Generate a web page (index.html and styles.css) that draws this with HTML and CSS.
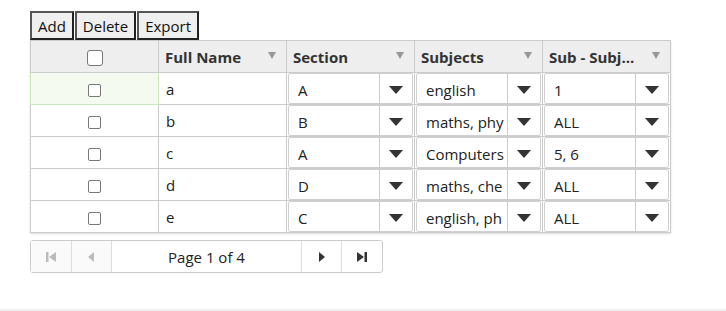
FILE: index.html
```html
<!DOCTYPE html>
<html>
<head>
<meta charset="utf-8">
<title>Students</title>
<link rel="stylesheet" href="styles.css">
</head>
<body>
<div id="page">
	<div class="toolbar">
		<button class="tool">Add</button><button class="tool">Delete</button><button class="tool">Export</button>
	</div>

	<table class="grid">
		<thead>
			<tr>
				<th class="check"><span class="box big"></span></th>
				<th><div class="head"><span>Full Name</span><i class="filter"></i></div></th>
				<th><div class="head"><span>Section</span><i class="filter"></i></div></th>
				<th><div class="head"><span>Subjects</span><i class="filter"></i></div></th>
				<th><div class="head"><span>Sub - Subj...</span><i class="filter"></i></div></th>
			</tr>
		</thead>
		<tbody>
			<tr>
				<td class="check focus"><span class="box"></span></td>
				<td class="name">a</td>
				<td class="drop"><div class="select"><span class="val">A</span><span class="arrow"></span></div></td>
				<td class="drop"><div class="select"><span class="val">english</span><span class="arrow"></span></div></td>
				<td class="drop"><div class="select"><span class="val">1</span><span class="arrow"></span></div></td>
			</tr>
			<tr>
				<td class="check"><span class="box"></span></td>
				<td class="name">b</td>
				<td class="drop"><div class="select"><span class="val">B</span><span class="arrow"></span></div></td>
				<td class="drop"><div class="select"><span class="val">maths, phy</span><span class="arrow"></span></div></td>
				<td class="drop"><div class="select"><span class="val">ALL</span><span class="arrow"></span></div></td>
			</tr>
			<tr>
				<td class="check"><span class="box"></span></td>
				<td class="name">c</td>
				<td class="drop"><div class="select"><span class="val">A</span><span class="arrow"></span></div></td>
				<td class="drop"><div class="select"><span class="val">Computers</span><span class="arrow"></span></div></td>
				<td class="drop"><div class="select"><span class="val">5, 6</span><span class="arrow"></span></div></td>
			</tr>
			<tr>
				<td class="check"><span class="box"></span></td>
				<td class="name">d</td>
				<td class="drop"><div class="select"><span class="val">D</span><span class="arrow"></span></div></td>
				<td class="drop"><div class="select"><span class="val">maths, che</span><span class="arrow"></span></div></td>
				<td class="drop"><div class="select"><span class="val">ALL</span><span class="arrow"></span></div></td>
			</tr>
			<tr>
				<td class="check"><span class="box"></span></td>
				<td class="name">e</td>
				<td class="drop"><div class="select"><span class="val">C</span><span class="arrow"></span></div></td>
				<td class="drop"><div class="select"><span class="val">english, ph</span><span class="arrow"></span></div></td>
				<td class="drop"><div class="select"><span class="val">ALL</span><span class="arrow"></span></div></td>
			</tr>
		</tbody>
	</table>

	<div class="pager">
		<span class="pbtn off"><svg width="12" height="12" viewBox="0 0 12 12"><rect x="1" y="1" width="2.5" height="10"/><path d="M11 1 L4 6 L11 11 Z"/></svg></span>
		<span class="pbtn off"><svg width="12" height="12" viewBox="0 0 12 12"><path d="M9 1 L3 6 L9 11 Z"/></svg></span>
		<span class="ptext">Page 1 of 4</span>
		<span class="pbtn"><svg width="12" height="12" viewBox="0 0 12 12"><path d="M3 1 L9 6 L3 11 Z"/></svg></span>
		<span class="pbtn"><svg width="12" height="12" viewBox="0 0 12 12"><path d="M1 1 L8 6 L1 11 Z"/><rect x="8.5" y="1" width="2.5" height="10"/></svg></span>
	</div>
</div>
<div class="footer"></div>
</body>
</html>
```

FILE: styles.css
```css
body {
	margin: 0;
	font-family: "Open Sans", "Noto Sans", sans-serif;
	font-size: 15px;
	color: #222;
	background: #fff;
}
#page {
	padding: 11px 30px 0 30px;
	height: 309px;
	box-sizing: border-box;
}
.toolbar {
	display: flex;
	gap: 1px;
	height: 29px;
}
.tool {
	font-family: inherit;
	font-size: 15px;
	color: #111;
	background: #efefef;
	border: 2px solid #333;
	border-color: #555 #222 #222 #555;
	padding: 0 6px;
	height: 29px;
	margin: 0;
	line-height: 24px;
}
.grid {
	border-collapse: collapse;
	table-layout: fixed;
	width: 641px;
	border: 1px solid #ccc;
	box-shadow: 0 1px 2px rgba(0,0,0,0.15);
}
.grid th {
	background: #eee;
	border: 1px solid #ccc;
	height: 31px;
	padding: 0;
	font-weight: bold;
	color: #333;
	text-align: left;
	width: 127px;
	line-height: 20px;
}
.head {
	display: flex;
	align-items: center;
	justify-content: space-between;
	padding: 0 10px 0 6px;
}
.head span {
	white-space: nowrap;
	overflow: hidden;
}
.filter {
	width: 0;
	height: 0;
	border-left: 4px solid transparent;
	border-right: 4px solid transparent;
	border-top: 7px solid #999;
	margin-top: -3px;
}
.grid td {
	border: 1px solid #ccc;
	height: 31px;
	padding: 0;
	line-height: 20px;
}
.grid .check {
	text-align: center;
}
.grid td.focus {
	background: #f4faef;
	border: 1px solid #cde8b8;
}
.box {
	display: inline-block;
	width: 11px;
	height: 11px;
	border: 1px solid #777;
	border-radius: 2px;
	background: #fff;
	vertical-align: middle;
}
.box.big {
	width: 14px;
	height: 14px;
	border-radius: 3px;
}
.grid td.name {
	padding-left: 7px;
}
.select {
	display: flex;
	height: 29px;
	margin: 0 1px;
	border: 1px solid #d0d0d0;
	border-radius: 2px;
	background: #fff;
	overflow: hidden;
}
.val {
	flex: 1;
	padding: 6px 0 0 9px;
	white-space: nowrap;
	overflow: hidden;
}
.arrow {
	width: 32px;
	border-left: 1px solid #ccc;
	display: flex;
	align-items: center;
	justify-content: center;
}
.arrow::after {
	content: "";
	border-left: 7px solid transparent;
	border-right: 7px solid transparent;
	border-top: 8px solid #333;
	margin-top: 2px;
}
.pager {
	display: flex;
	width: 351px;
	height: 31px;
	margin-top: 7px;
	border: 1px solid #ccc;
	border-radius: 3px;
}
.pbtn {
	width: 40px;
	display: flex;
	align-items: center;
	justify-content: center;
	border-right: 1px solid #ddd;
	fill: #333;
}
.pbtn.off {
	fill: #bbb;
	background: #fafafa;
}
.pbtn:last-child {
	border-right: 0;
}
.ptext {
	width: 190px;
	border-right: 1px solid #ddd;
	text-align: center;
	line-height: 32px;
	color: #222;
}
.footer {
	border-top: 2px solid #f0f0f0;
}
```
